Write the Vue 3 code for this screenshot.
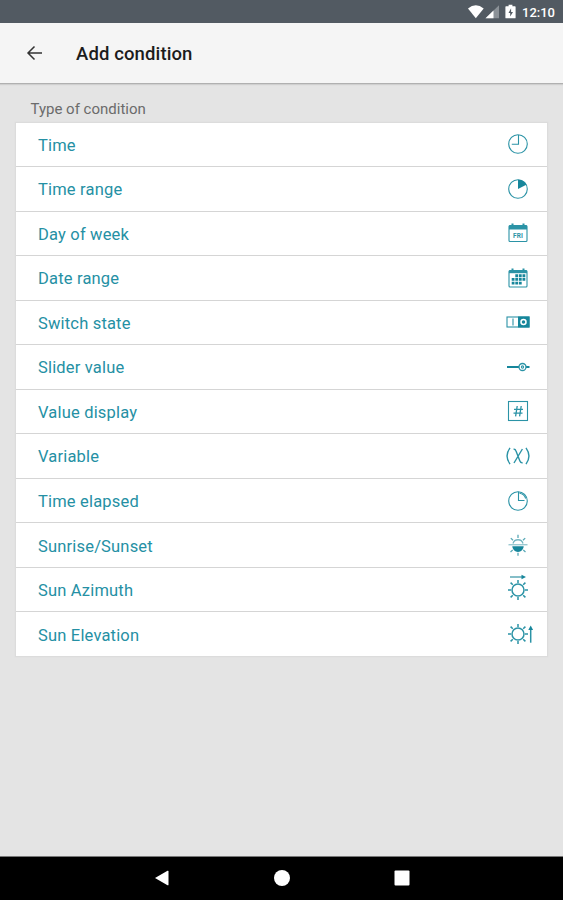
<script setup>
const rows = [
  { label: 'Time', icon: 'time' },
  { label: 'Time range', icon: 'range' },
  { label: 'Day of week', icon: 'day' },
  { label: 'Date range', icon: 'date' },
  { label: 'Switch state', icon: 'switch' },
  { label: 'Slider value', icon: 'slider' },
  { label: 'Value display', icon: 'value' },
  { label: 'Variable', icon: 'variable' },
  { label: 'Time elapsed', icon: 'elapsed' },
  { label: 'Sunrise/Sunset', icon: 'sunset' },
  { label: 'Sun Azimuth', icon: 'azimuth' },
  { label: 'Sun Elevation', icon: 'elevation' },
]
const sunRays = 'M16 6v3M16 23v3M6 16h3M23 16h3M8.6 8.600l2.200 2.200M21.200 21.200l2.200 2.200M8.600 23.400l2.200-2.200M21.200 10.800l2.200-2.200'
</script>

<template>
  <div class="screen">
    <div class="status">
      <svg class="status-icons" width="52" height="16" viewBox="0 0 52 16">
        <path d="M0 4.400Q7.800-1.800 15.700 4.400L7.800 14.300Z" fill="#fff" />
        <path d="M17.500 14.300L31 1.300V14.300Z" fill="#8b9197" />
        <path d="M17.500 14.300L25.500 6.500V14.300Z" fill="#fff" />
        <path d="M40.600 .800h3.800v1.500h2.600q.6 0 .6.6v10.800q0 .6-.6.6h-9q-.6 0-.6-.6V2.900q0-.6.6-.6h2.600Z" fill="#fff" />
        <path d="M43.100 4.300L40.500 8.900h1.700v3.600L45 7.900h-1.900Z" fill="#525a62" />
      </svg>
      <span class="clock">12:10</span>
    </div>
    <header class="bar">
      <svg class="back" width="18" height="18" viewBox="0 0 18 18">
        <path d="M16 9H2.400M8.500 2.500L2 9L8.500 15.500" fill="none" stroke="#333" stroke-width="1.500" />
      </svg>
      <h1>Add condition</h1>
    </header>
    <main>
      <div class="section">Type of condition</div>
      <ul class="card">
        <li v-for="row in rows" :key="row.icon">
          <span class="label">{{ row.label }}</span>
          <svg class="icon" width="32" height="32" viewBox="0 0 32 32" fill="none" stroke="#2b93a6" stroke-width="1.100">
            <g v-if="row.icon === 'time'">
              <circle cx="16" cy="16" r="9.300" />
              <path d="M16.500 7V16.300H9.800" />
            </g>
            <g v-else-if="row.icon === 'range'">
              <circle cx="16" cy="16" r="9.300" />
              <path d="M16 16V6.700A9.300 9.300 0 0 1 24.300 11.800Z" fill="#16869b" stroke="none" />
            </g>
            <g v-else-if="row.icon === 'day'">
              <rect x="7" y="8.500" width="18" height="16" rx="1" />
              <path d="M7 8.500h18v4H7z" fill="#2b93a6" stroke="none" />
              <path d="M10.500 6.500v3.500M21.500 6.500v3.500" stroke-width="2" />
              <text x="16" y="21.300" text-anchor="middle" class="fri">FRI</text>
            </g>
            <g v-else-if="row.icon === 'date'">
              <rect x="7" y="8.500" width="18" height="16.500" rx="1" />
              <path d="M7 8.500h18v2.700H7z" fill="#2b93a6" stroke="none" />
              <path d="M10.500 6.500v3.500M21.500 6.500v3.500" stroke-width="2" />
              <path d="M13.300 13.700H23.500M9.700 17.400H23.500M9.700 21.100H20" stroke="#16869b" stroke-width="2.900" stroke-dasharray="2.800 .8" />
            </g>
            <g v-else-if="row.icon === 'switch'">
              <rect x="5" y="11" width="22" height="10" />
              <path d="M16 10.500h11.500v11H16z" fill="#16869b" stroke="none" />
              <path d="M11 12.500v7" />
              <circle cx="21.500" cy="16" r="2.500" stroke="#fff" stroke-width="1.500" />
            </g>
            <g v-else-if="row.icon === 'slider'">
              <path d="M5 16H18M23 16h4.500" stroke="#16869b" stroke-width="2" />
              <circle cx="20.500" cy="16" r="3.500" fill="#fff" stroke-width="1.300" />
              <circle cx="20.500" cy="16" r="1.100" />
            </g>
            <g v-else-if="row.icon === 'value'">
              <rect x="6.500" y="6.500" width="19" height="19" />
              <path d="M15.200 11l-1.600 10.400M19.200 11l-1.600 10.400M12 14.300h9M11.500 18.200h9" stroke-width="1.300" />
            </g>
            <g v-else-if="row.icon === 'variable'" stroke-width="1.400">
              <path d="M8 7.800Q2.100 16 8 24.200M24 7.800Q29.900 16 24 24.200" />
              <path d="M11.600 9.300Q13.300 9 14 11L17.900 21Q18.700 23 20.600 22.700M20.400 9L12 23" />
            </g>
            <g v-else-if="row.icon === 'elapsed'">
              <circle cx="16" cy="16" r="9.300" />
              <path d="M16.500 6.700V15.500H22.500" />
              <path d="M17.500 8.300Q22.300 9 23.700 13.500" />
            </g>
            <g v-else-if="row.icon === 'sunset'" stroke-width="1.300">
              <path d="M16 5.800v3.200M16 23.800v3M8.800 9.100l2.200 2.200M23.200 9.100l-2.200 2.200M8.500 23l2.200-1.900M23.500 23l-2.200-1.900" stroke="#5aa9b7" />
              <path d="M6.500 15.700h19" stroke="#9bc9d1" stroke-width="1.400" />
              <path d="M11 14.500a5.200 5.200 0 0 1 10 0" stroke="#74b5c1" />
              <path d="M10.300 17.300h11.400a5.700 5.700 0 0 1-11.400 0Z" fill="#16869b" stroke="none" />
            </g>
            <g v-else>
              <circle cx="16" cy="16" r="6" stroke-width="1.500" />
              <path :d="sunRays" stroke-width="1.500" />
              <g v-if="row.icon === 'azimuth'">
                <path d="M8 3h12" stroke="#6fb3bf" stroke-width="1.700" />
                <path d="M19.500 .800L24 3L19.500 5.200Z" fill="#16869b" stroke="none" />
              </g>
              <g v-else>
                <path d="M28.700 24.700V10" stroke-width="1.500" />
                <path d="M26.300 12L28.700 7.500L31.100 12Z" fill="#16869b" stroke="none" />
              </g>
            </g>
          </svg>
        </li>
      </ul>
    </main>
    <nav class="nav">
      <svg width="18" height="18" viewBox="0 0 18 18"><path d="M2 9L14.500 1.800Q15.500 1.300 15.500 2.500V15.500Q15.500 16.700 14.500 16.200Z" fill="#fff" /></svg>
      <svg width="18" height="18" viewBox="0 0 18 18"><circle cx="9" cy="9" r="8" fill="#fff" /></svg>
      <svg width="18" height="18" viewBox="0 0 18 18"><rect x="1.500" y="1.500" width="15" height="15" rx="1" fill="#fff" /></svg>
    </nav>
  </div>
</template>

<style>
body { margin: 0; }
</style>

<style scoped>
.screen {
  width: 563px;
  height: 900px;
  display: flex;
  flex-direction: column;
  overflow: hidden;
  background: #e4e4e4;
  font-family: Roboto, sans-serif;
}
.status {
  height: 23px;
  flex: none;
  box-sizing: border-box;
  padding: 1px 8px 0 0;
  background: #525a62;
  display: flex;
  align-items: center;
  justify-content: flex-end;
}
.status-icons { margin-right: 2px; }
.clock {
  color: #fff;
  font-size: 13px;
  font-weight: 500;
  width: 33px;
  text-align: right;
}
.bar {
  height: 61px;
  flex: none;
  box-sizing: border-box;
  padding: 0 0 1px 26px;
  background: #f5f5f5;
  border-bottom: 1px solid #b0b0b0;
  box-shadow: 0 1px 1px #cfcfcf;
  display: flex;
  align-items: center;
  gap: 32px;
}
h1 {
  margin: 2px 0 0;
  font-size: 18.500px;
  font-weight: 500;
  letter-spacing: .12px;
  line-height: 24px;
  color: #1c1c1c;
}
main {
  flex: 1;
  padding: 15px 16px 0;
}
.section {
  height: 23.500px;
  padding-left: 14.500px;
  font-size: 15px;
  line-height: 20px;
  color: #6b6b6b;
}
.card {
  list-style: none;
  margin: 0;
  padding: 0;
  width: 531px;
  background: #fff;
  box-shadow: 0 0 1px 1px #dcdcdc;
}
li {
  height: 44.540px;
  box-sizing: border-box;
  padding: 0 13px 0 22px;
  border-bottom: 1px solid #d5d5d5;
  display: flex;
  align-items: center;
  justify-content: space-between;
  color: #2590a4;
  font-size: 16.500px;
  letter-spacing: .18px;
}
li:last-child {
  height: 43.600px;
  border-bottom: 0;
}
.label { padding-top: 2px; }
.icon { overflow: visible; }
.fri {
  font-size: 6.500px;
  font-weight: 700;
  letter-spacing: .2px;
  fill: #2b93a6;
  stroke: none;
}
.nav {
  height: 44px;
  flex: none;
  padding-bottom: 2px;
  background: #000;
  border-top: 1px solid #777;
  box-sizing: border-box;
  display: flex;
  align-items: center;
  justify-content: center;
  gap: 102px;
}
</style>
